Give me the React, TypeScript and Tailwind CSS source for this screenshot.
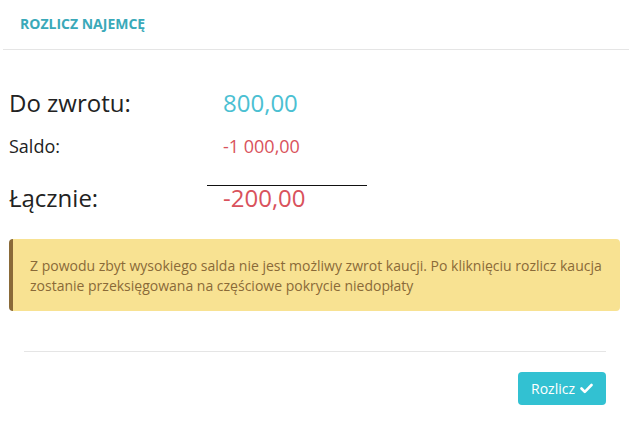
import React from "react";

export default function App() {
  return (
    <div className="w-[632px] h-[439px] bg-white overflow-hidden" style={{ fontFamily: '"Open Sans", sans-serif' }}>
      <div className="mx-[3px] h-[50px] border-b border-[#e5e5e5] pl-[17px] pt-[14px]">
        <div className="text-[14px] font-bold leading-[20px] text-[#3aa9b9]">ROZLICZ NAJEMCĘ</div>
      </div>
      <div className="pl-[9px] pt-[36px]">
        <div className="flex items-baseline h-[34px]">
          <div className="w-[214px] text-[24px] leading-[34px] text-[#222]">Do zwrotu:</div>
          <div className="text-[24px] leading-[34px] text-[#4bc0d2]">800,00</div>
        </div>
        <div className="flex items-baseline h-[26px] mt-[13px]">
          <div className="w-[214px] text-[18px] leading-[26px] text-[#222]">Saldo:</div>
          <div className="text-[18px] leading-[26px] text-[#d9525c]">-1 000,00</div>
        </div>
        <div className="ml-[198px] mt-[26px] w-[160px] border-t border-[#111]" />
        <div className="flex items-baseline h-[34px] mt-[-5px]">
          <div className="w-[214px] text-[24px] leading-[34px] text-[#222]">Łącznie:</div>
          <div className="text-[24px] leading-[34px] text-[#d9525c]">-200,00</div>
        </div>
      </div>
      <div className="mt-[24px] ml-[9px] mr-[12px] rounded-[4px] border-l-[4px] border-[#8a6a38] bg-[#f8e292] pl-[17px] pr-[10px] pt-[17px] pb-[15px] text-[14px] leading-[20px] text-[#8a6a38]">
        Z powodu zbyt wysokiego salda nie jest możliwy zwrot kaucji. Po kliknięciu rozlicz kaucja zostanie przeksięgowana na częściowe pokrycie niedopłaty
      </div>
      <div className="ml-[24px] mr-[26px] mt-[40px] border-t border-[#e5e5e5] flex justify-end pt-[20px]">
        <button className="h-[33px] w-[88px] rounded-[4px] bg-[#32c1d2] text-white text-[14px] flex items-center justify-center gap-[5px]">
          <span>Rozlicz</span>
          <svg width="13" height="11" viewBox="0 0 13 11">
            <path d="M1.5 5.5 L4.8 8.8 L11.5 2" stroke="white" strokeWidth="2.6" fill="none" strokeLinecap="round" strokeLinejoin="round" />
          </svg>
        </button>
      </div>
    </div>
  );
}
